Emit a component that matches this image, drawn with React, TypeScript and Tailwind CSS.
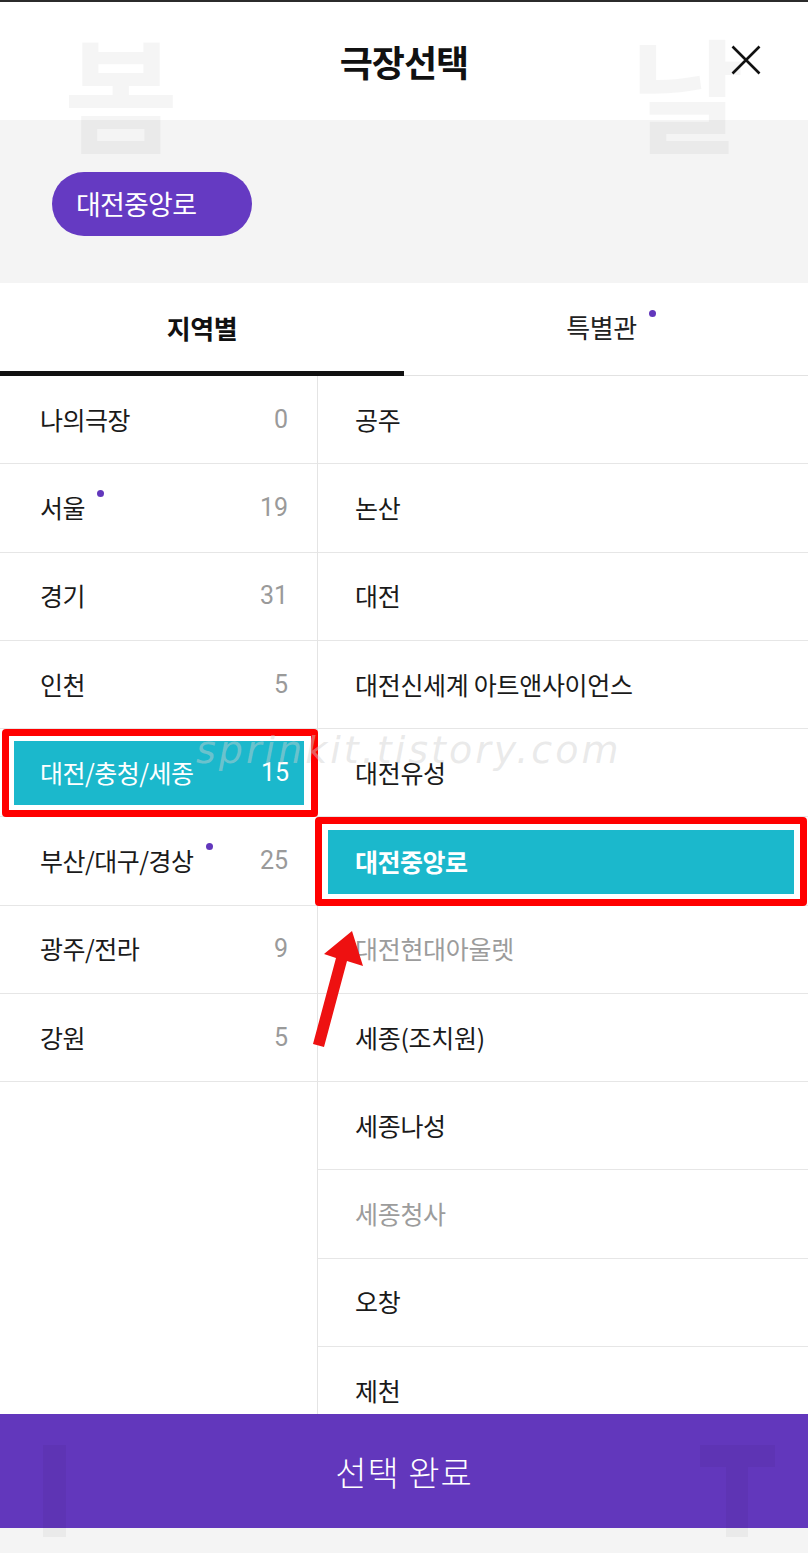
import React from "react";

const PURPLE = "#6237bc";
const TEAL = "#1bb8cc";

type Region = { name: string; count: number; dot?: boolean; selected?: boolean };

const regions: Region[] = [
  { name: "나의극장", count: 0 },
  { name: "서울", count: 19, dot: true },
  { name: "경기", count: 31 },
  { name: "인천", count: 5 },
  { name: "대전/충청/세종", count: 15, selected: true },
  { name: "부산/대구/경상", count: 25, dot: true },
  { name: "광주/전라", count: 9 },
  { name: "강원", count: 5 },
];

type Theater = { name: string; disabled?: boolean; selected?: boolean };

const theaters: Theater[] = [
  { name: "공주" },
  { name: "논산" },
  { name: "대전" },
  { name: "대전신세계 아트앤사이언스" },
  { name: "대전유성" },
  { name: "대전중앙로", selected: true },
  { name: "대전현대아울렛", disabled: true },
  { name: "세종(조치원)" },
  { name: "세종나성" },
  { name: "세종청사", disabled: true },
  { name: "오창" },
  { name: "제천" },
];

function Dot({ className = "" }: { className?: string }) {
  return <span className={`inline-block w-[7px] h-[7px] rounded-full bg-[#6237bc] ${className}`} />;
}

export default function App() {
  return (
    <div className="relative w-[808px] h-[1553px] flex flex-col bg-white overflow-hidden font-['Noto_Sans_CJK_KR','Noto_Sans',sans-serif] text-[#111]">
      {/* top frame line */}
      <div className="h-[2px] bg-[#2b2b2b] shrink-0" />

      {/* header */}
      <div className="h-[118px] shrink-0 flex items-center justify-center relative">
        <h1 className="text-[36px] font-bold tracking-[-1px] leading-none">극장선택</h1>
        <button className="absolute right-[47px] top-[43px] w-[30px] h-[30px] flex items-center justify-center">
          <svg width="30" height="30" viewBox="0 0 30 30">
            <path d="M1.5 1.5 L28.5 28.5 M28.5 1.5 L1.5 28.5" stroke="#111" strokeWidth="2.6" strokeLinecap="butt" />
          </svg>
        </button>
      </div>

      {/* selected chip area */}
      <div className="h-[163px] shrink-0 bg-[#f4f4f4] pl-[52px] pt-[52px]">
        <div className="w-[200px] h-[64px] rounded-full bg-[#653ac2] flex items-center pl-[24px] text-white text-[27px] tracking-[-0.8px]">
          대전중앙로
        </div>
      </div>

      {/* tabs */}
      <div className="h-[93px] shrink-0 flex">
        <div className="w-[404px] flex items-center justify-center border-b-[5px] border-[#111] pt-[1px]">
          <span className="text-[26px] font-bold tracking-[-0.5px]">지역별</span>
        </div>
        <div className="flex-1 flex items-center justify-center border-b border-[#e2e2e2] pb-[5px] pl-[10px]">
          <span className="text-[26px] text-[#222] tracking-[-0.5px]">특별관</span>
          <Dot className="ml-[12px] -translate-y-[13px]" />
        </div>
      </div>

      {/* lists */}
      <div className="flex-1 flex overflow-hidden">
        <div className="w-[318px] shrink-0 border-r border-[#e4e4e4]">
          {regions.map((r) =>
            r.selected ? (
              <div key={r.name} className="relative h-[88.25px] border-b border-[#e6e6e6] pt-[12px] pb-[11px] pl-[14px] pr-[13px] flex">
                <div className="flex-1 flex items-center justify-between pl-[26px] pr-[15px]" style={{ backgroundColor: TEAL }}>
                  <span className="text-[25px] text-white tracking-[-0.5px]">{r.name}</span>
                  <span className="text-[25px] text-white font-['Roboto',sans-serif]">{r.count}</span>
                </div>
                <div className="absolute left-[2px] top-[0px] right-[-1px] bottom-[-1px] border-[7px] border-[#f00] rounded-[4px] pointer-events-none" />
              </div>
            ) : (
              <div key={r.name} className="h-[88.25px] border-b border-[#e6e6e6] flex items-center justify-between pl-[40px] pr-[29px]">
                <span className="flex items-center">
                  <span className="text-[25px] tracking-[-0.5px] text-[#1a1a1a]">{r.name}</span>
                  {r.dot && <Dot className="ml-[12px] -translate-y-[14px]" />}
                </span>
                <span className="text-[25px] text-[#9a9a9a] font-['Roboto',sans-serif]">{r.count}</span>
              </div>
            )
          )}
        </div>
        <div className="flex-1">
          {theaters.map((t) =>
            t.selected ? (
              <div key={t.name} className="relative h-[88.25px] border-b border-[#e6e6e6] pt-[13px] pb-[11px] pl-[10px] pr-[14px] flex">
                <div className="flex-1 flex items-center pl-[27px]" style={{ backgroundColor: TEAL }}>
                  <span className="text-[25px] text-white font-bold tracking-[-0.5px]">{t.name}</span>
                </div>
                <div className="absolute left-[-3px] top-[0px] right-[1px] bottom-[-1px] border-[7px] border-[#f00] rounded-[4px] pointer-events-none" />
              </div>
            ) : (
              <div key={t.name} className="h-[88.25px] border-b border-[#e6e6e6] flex items-center pl-[37px]">
                <span className={`text-[25px] tracking-[-0.3px] ${t.disabled ? "text-[#9c9c9c]" : "text-[#1a1a1a]"}`}>{t.name}</span>
              </div>
            )
          )}
        </div>
      </div>

      {/* bottom button */}
      <button className="h-[114px] shrink-0 flex items-center justify-center text-white text-[34px] font-light tracking-[1px]" style={{ backgroundColor: PURPLE }}>
        선택 완료
      </button>
      <div className="h-[25px] shrink-0 bg-[#f4f4f4]" />

      {/* faint background watermark glyphs */}
      <div className="absolute left-[64px] top-[22px] text-[124px] font-bold leading-[1.1] text-black/[0.04] pointer-events-none select-none">봄</div>
      <div className="absolute left-[630px] top-[22px] text-[124px] font-bold leading-[1.1] text-black/[0.04] pointer-events-none select-none">날</div>
      <div className="absolute left-[43px] top-[1445px] w-[23px] h-[92px] bg-black/[0.04] pointer-events-none" />
      <div className="absolute left-[700px] top-[1445px] w-[75px] h-[22px] bg-black/[0.04] pointer-events-none" />
      <div className="absolute left-[726px] top-[1467px] w-[22px] h-[70px] bg-black/[0.04] pointer-events-none" />

      {/* blog watermark */}
      <div className="absolute left-[196px] top-[722px] text-[38px] italic font-light tracking-[3px] text-[#d0d0d0]/45 font-['DejaVu_Sans',sans-serif] pointer-events-none select-none whitespace-nowrap">
        sprinkit.tistory.com
      </div>

      {/* red annotation arrow */}
      <svg className="absolute left-0 top-0 pointer-events-none" width="808" height="1553" viewBox="0 0 808 1553">
        <polygon
          points="352,931 363,966 347,961 324,1047 313,1044 336,958 324,954"
          fill="#ee1111"
        />
      </svg>
    </div>
  );
}
